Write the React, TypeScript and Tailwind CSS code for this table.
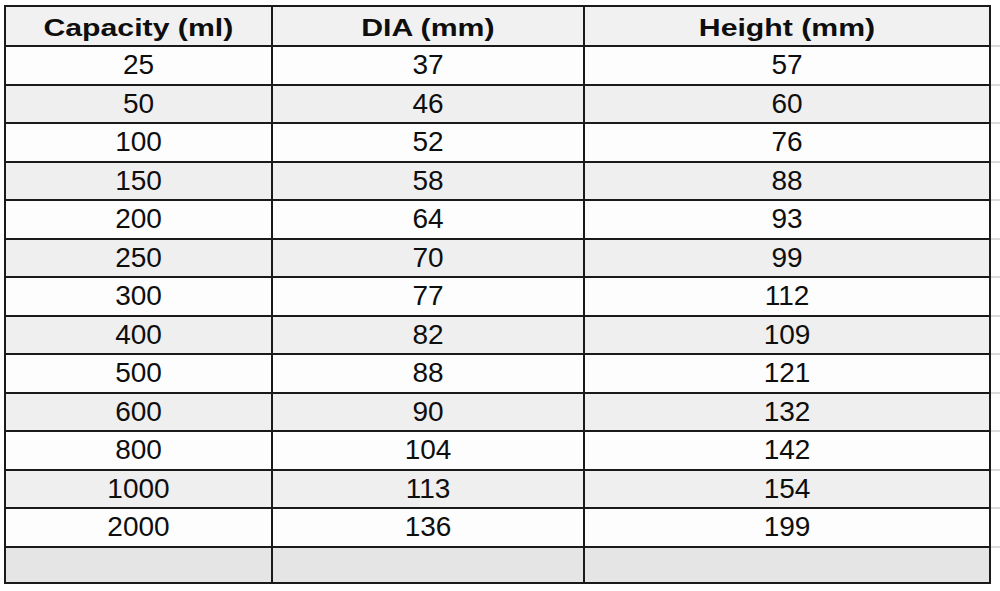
const rows: [string, string, string][] = [
  ["25", "37", "57"],
  ["50", "46", "60"],
  ["100", "52", "76"],
  ["150", "58", "88"],
  ["200", "64", "93"],
  ["250", "70", "99"],
  ["300", "77", "112"],
  ["400", "82", "109"],
  ["500", "88", "121"],
  ["600", "90", "132"],
  ["800", "104", "142"],
  ["1000", "113", "154"],
  ["2000", "136", "199"],
];

const headers = ["Capacity (ml)", "DIA (mm)", "Height (mm)"];

export default function App() {
  return (
    <div className="w-[1000px] h-[591px] bg-white pt-[5px] pl-[4px] flex items-start font-['Liberation_Sans',Arial,sans-serif] text-[#0e0e0e]">
      <div className="w-[987px] h-[579px] border-2 border-[#1a1a1a] grid grid-cols-[267px_312px_1fr] grid-rows-[40px_repeat(13,38.5px)_1fr]">
        {headers.map((h, i) => (
          <div
            key={h}
            className={`bg-[#f1f1f1] border-b-2 border-[#1a1a1a] flex items-center justify-center pt-[4px] ${i < 2 ? "border-r-2" : ""}`}
          >
            <span className="inline-block scale-x-[1.26] text-[24px] font-bold leading-none">{h}</span>
          </div>
        ))}
        {rows.map((r, ri) =>
          r.map((v, ci) => (
            <div
              key={ri + "-" + ci}
              className={`border-b-2 border-[#1a1a1a] flex items-center justify-center ${ci < 2 ? "border-r-2" : ""} ${ri % 2 === 0 ? "bg-[#fdfdfd]" : "bg-[#efefef]"}`}
            >
              <span className="text-[28px] leading-none">{v}</span>
            </div>
          ))
        )}
        {[0, 1, 2].map((ci) => (
          <div
            key={"e" + ci}
            className={`bg-[#e5e5e5] border-[#1a1a1a] ${ci < 2 ? "border-r-2" : ""}`}
          />
        ))}
      </div>
      {/* faint gridline stubs past the right edge */}
      <div className="flex-1 h-[579px] pt-[2px] grid grid-rows-[40px_repeat(13,38.5px)_1fr]">
        <div className="border-b-2 border-[#dadada]" />
        {rows.map((_, i) => (
          <div key={i} className="border-b-2 border-[#dadada]" />
        ))}
        <div />
      </div>
    </div>
  );
}
